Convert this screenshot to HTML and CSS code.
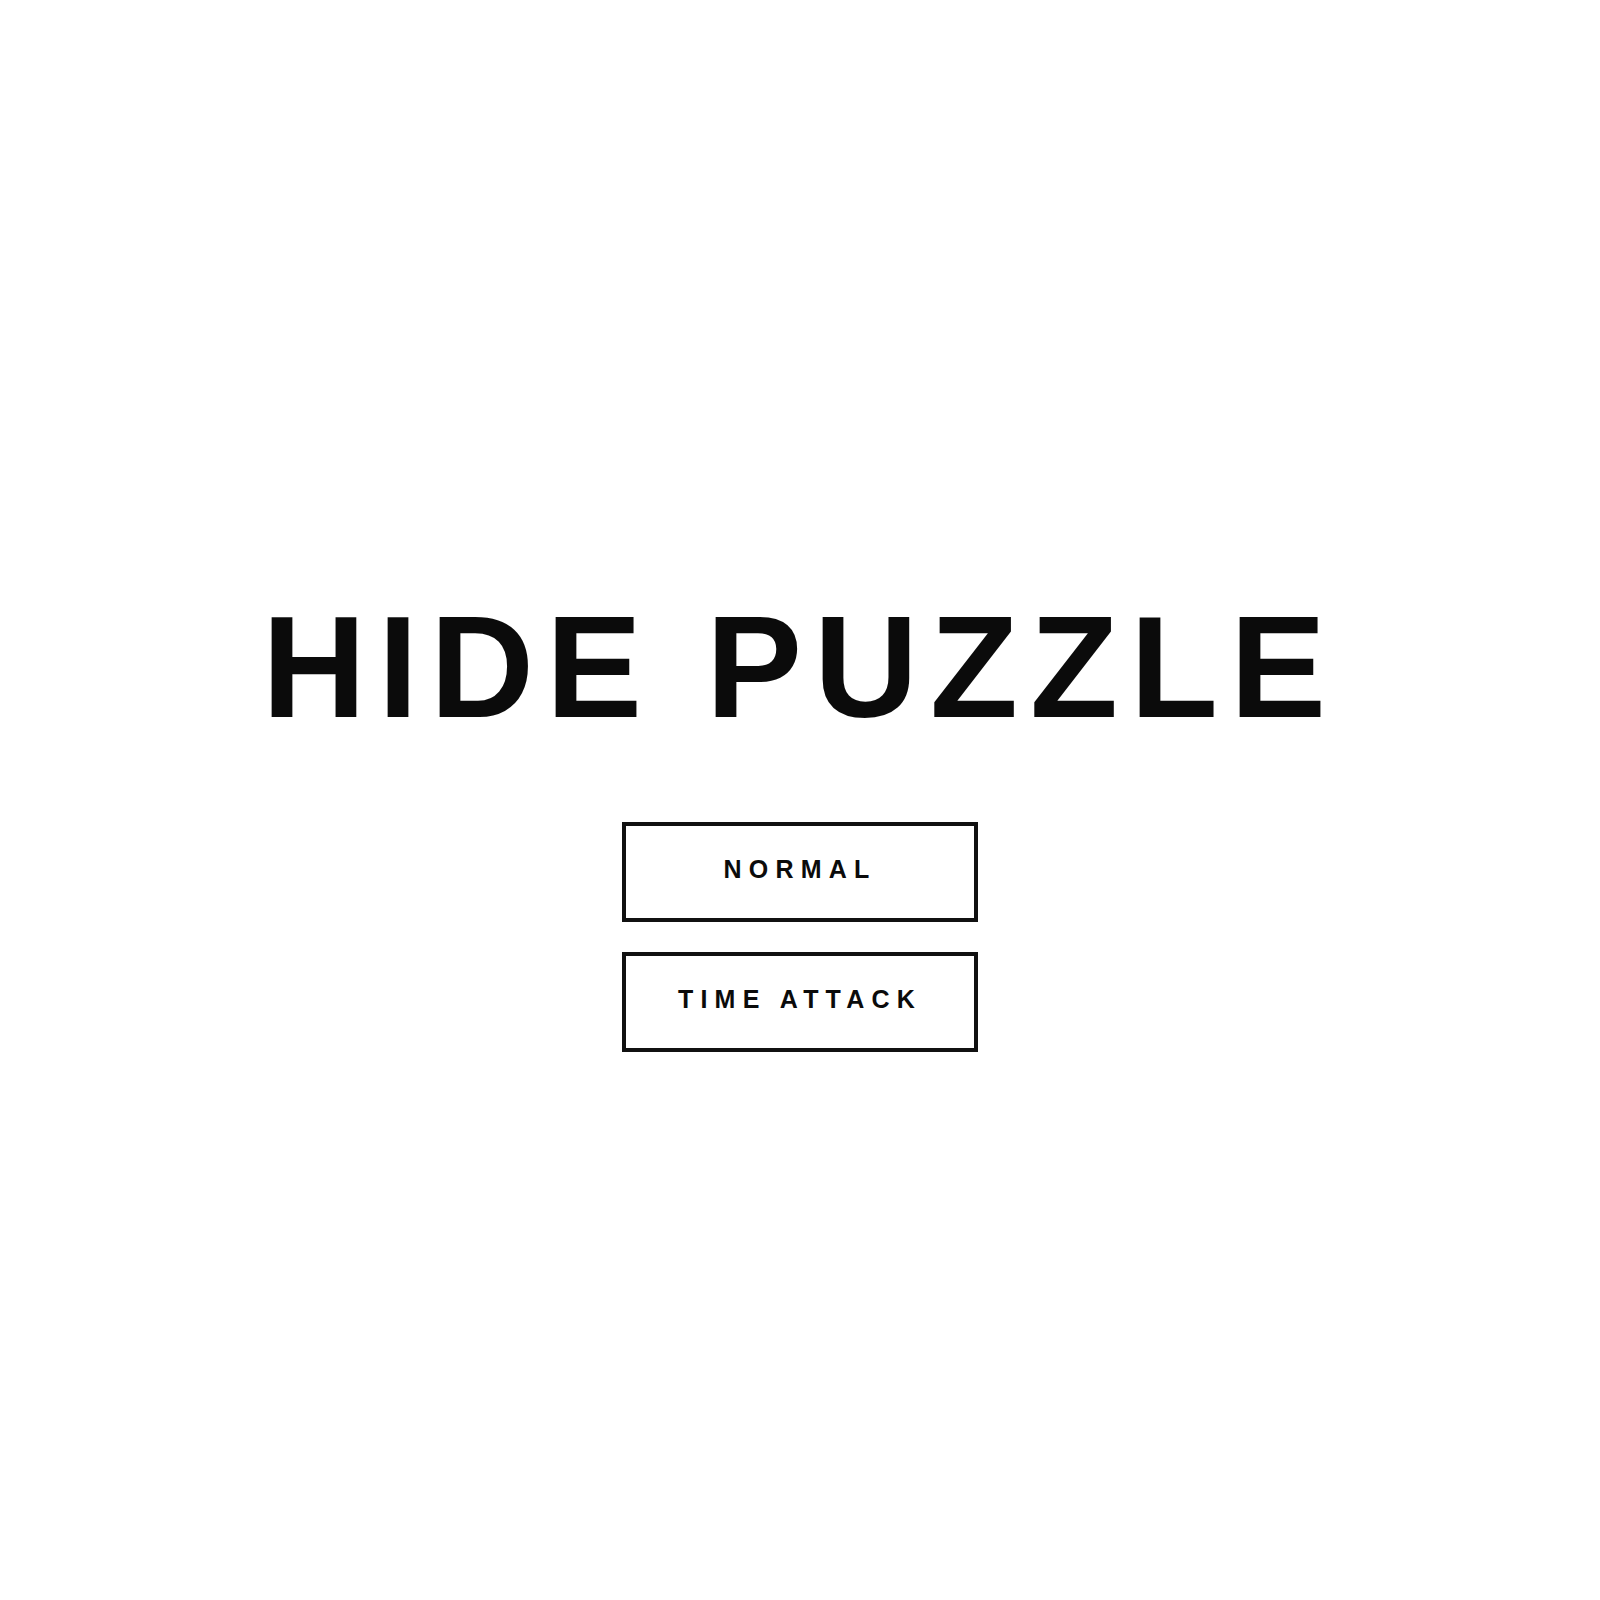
FILE: index.html
```html
<!DOCTYPE html>
<html lang="en">
<head>
<meta charset="utf-8">
<title>Hide Puzzle</title>
<link rel="stylesheet" href="styles.css">
</head>
<body>
<main class="screen">
  <h1 class="title">HIDE PUZZLE</h1>
  <div class="modes">
    <button class="mode-btn">NORMAL</button>
    <button class="mode-btn">TIME ATTACK</button>
  </div>
</main>
</body>
</html>
```

FILE: styles.css
```css
html, body {
  margin: 0;
  padding: 0;
  background: #ffffff;
}

.screen {
  box-sizing: border-box;
  min-height: 100vh;
  padding-top: 47px;
  display: flex;
  flex-direction: column;
  align-items: center;
  justify-content: center;
  font-family: "Liberation Sans", Arial, sans-serif;
  color: #0b0b0b;
}

.title {
  margin: 0 0 82px 0;
  font-size: 144px;
  line-height: 144px;
  font-weight: 700;
  letter-spacing: 12px;
  color: #0b0b0b;
}

.modes {
  display: flex;
  flex-direction: column;
  gap: 30px;
}

.mode-btn {
  box-sizing: border-box;
  width: 356px;
  height: 100px;
  border: 4px solid #111111;
  background: #ffffff;
  padding: 0 0 4px 0;
  display: flex;
  align-items: center;
  justify-content: center;
  font-family: "Liberation Sans", Arial, sans-serif;
  font-size: 25px;
  font-weight: 700;
  letter-spacing: 7.2px;
  color: #0b0b0b;
  cursor: pointer;
}
```
